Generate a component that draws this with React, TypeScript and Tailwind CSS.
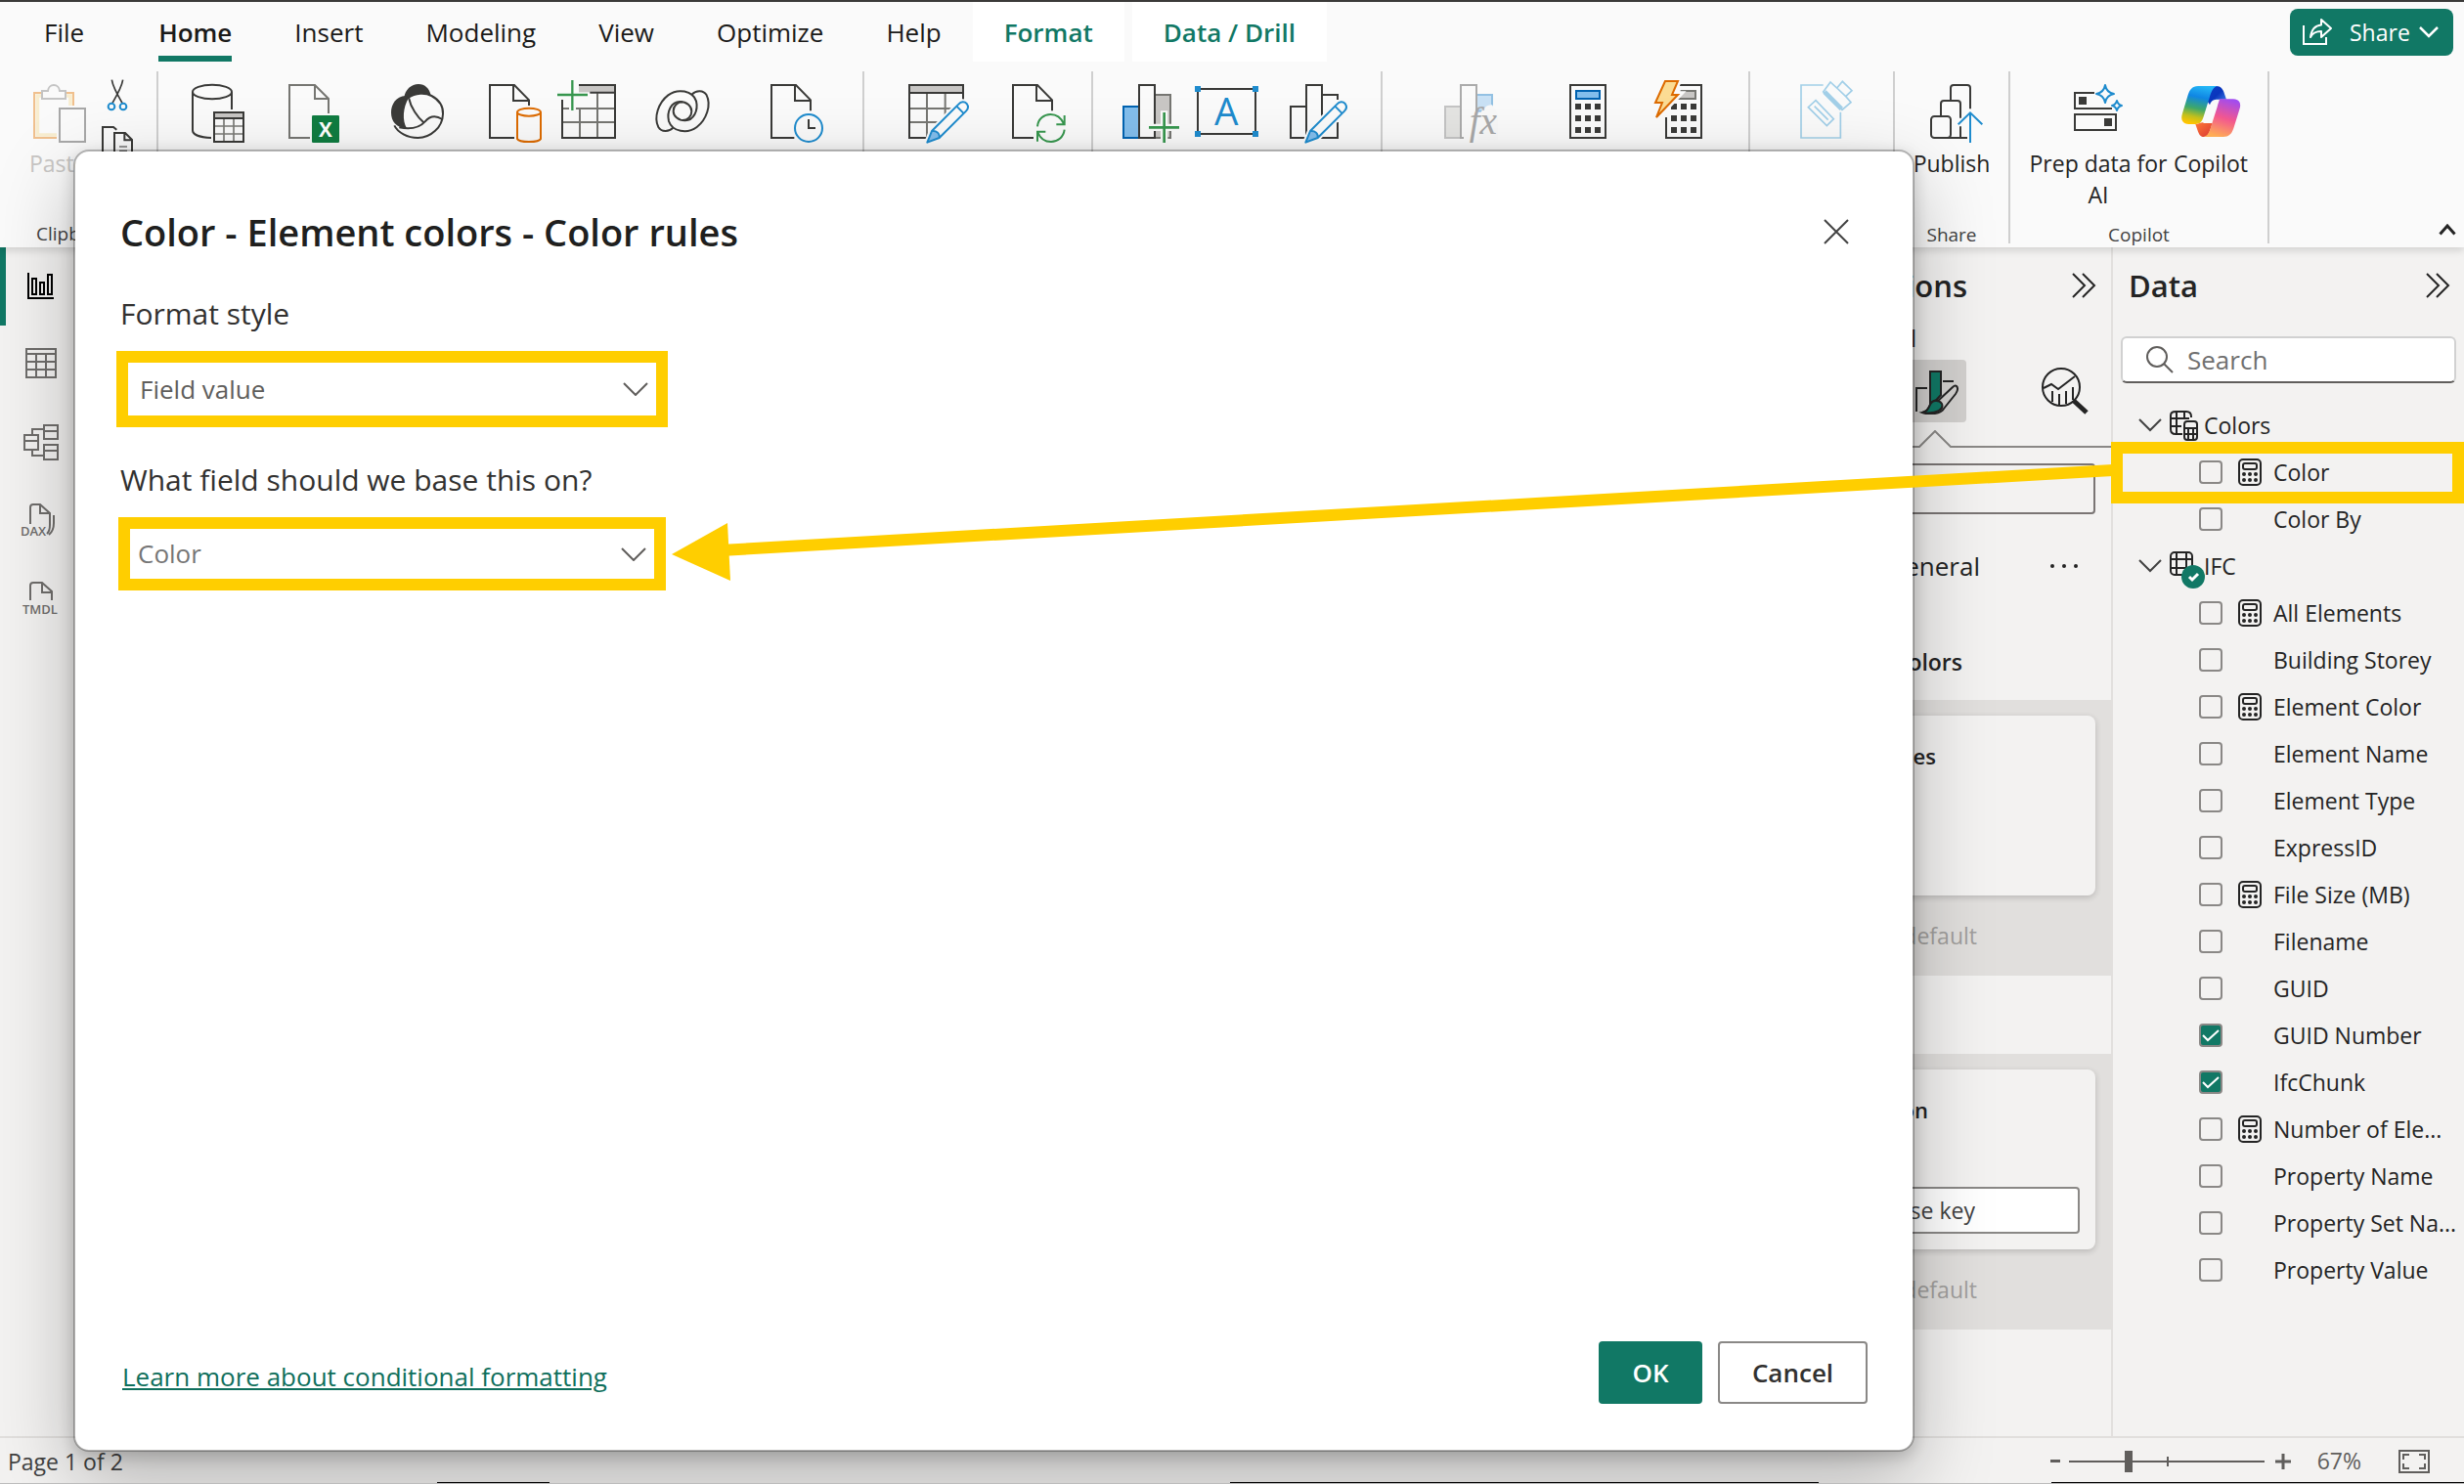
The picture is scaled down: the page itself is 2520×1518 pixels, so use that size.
import type { ReactNode } from "react";

const INK = "#3a3a38";
const BLUE = "#1e8bcd";
const GREEN = "#37964e";
const TEAL = "#117865";

type ArtProps = { vb: string; className: string; children: ReactNode };

/* Ribbon drawings use three drawing units per pixel, so a stroke of 6 is 2px. */
function Art({ vb, className, children }: ArtProps) {
  return (
    <svg viewBox={vb} className={"shrink-0 " + className} fill="none" stroke={INK} strokeWidth={6} aria-hidden="true">
      {children}
    </svg>
  );
}

function RibbonButton({ label, className, children }: { label: string; className: string; children: ReactNode }) {
  return (
    <button type="button" aria-label={label} className={"h-[68px] " + className}>
      {children}
    </button>
  );
}

function Group({ label, className, children }: { label?: string; className?: string; children: ReactNode }) {
  return (
    <section className={"flex h-44 flex-col justify-between border-r-2 border-[#cfcfcf] pt-[7px] " + (className ?? "")}>
      <div className="flex items-start">{children}</div>
      {label && <div className="h-5 text-center text-[19px] leading-[23px] text-[#424242]">{label}</div>}
    </section>
  );
}

function Pencil({ x = 0 }: { x?: number }) {
  return (
    <g transform={`translate(${x} 0)`}>
      <path d="M630 192 L712 110 C720 101 730 101 737 108 C743 116 742 124 735 131 L653 213 L616 227Z" stroke="#fafafa" strokeWidth={18} fill="#fafafa" />
      <path d="M630 192 C645 190 655 200 653 213 L616 227Z" fill="#83beec" stroke="none" />
      <path d="M630 192 L712 110 C720 101 730 101 737 108 C743 116 742 124 735 131 L653 213 L616 227Z M706 116 L729 139 M630 192 C645 190 655 200 653 213" stroke={BLUE} strokeLinejoin="round" />
    </g>
  );
}

function Paste() {
  return (
    <Art vb="30 30 180 204" className="h-[68px] w-[60px]">
      <path d="M72 75 H45 V213 H114 M138 75 H165 V114" stroke="#f0c08e" />
      <path d="M68 84 H55 V204 H114 M144 84 H156 V114" stroke="#f8edcf" strokeWidth={11} />
      <path d="M69 69 H87 C88 58 96 51 105 51 C114 51 122 58 123 69 H141 V93 H69Z" stroke="#c4c4c4" fill="#fafafa" />
      <rect x="123" y="123" width="78" height="102" stroke="#a8a8a8" fill="#fafafa" />
    </Art>
  );
}

function Cut() {
  return (
    <Art vb="240 30 120 108" className="h-9 w-10">
      <path d="M283 35 C286 55 295 72 315 106 M317 35 C314 55 305 72 285 106" strokeWidth={5} />
      <circle cx="282" cy="117" r="10" stroke={BLUE} />
      <circle cx="318" cy="117" r="10" stroke={BLUE} />
    </Art>
  );
}

function Copy() {
  return (
    <Art vb="240 168 120 120" className="h-10 w-10">
      <path d="M255 270 V180 H288 L298 188" />
      <path d="M291 290 V198 H324 L345 219 V290 M322 198 V220 H345" />
      <path d="M306 240 H330 M306 253 H330" stroke="#777" strokeWidth={5} />
    </Art>
  );
}

function GetData() {
  return (
    <Art vb="519 30 180 204" className="h-[68px] w-[60px]">
      <ellipse cx="591" cy="72" rx="60" ry="22" />
      <path d="M531 72 V190 C531 204 555 212 588 213 M651 72 V126" />
      <rect x="597" y="135" width="90" height="18" fill="#c8c6c4" stroke="none" />
      <path d="M597 177 H687 M597 201 H687 M627 153 V225 M657 153 V225" stroke="#7a7a76" strokeWidth={5} />
      <path d="M597 135 H687 V225 H597Z M597 153 H687" />
    </Art>
  );
}

function Excel() {
  return (
    <Art vb="813 30 180 204" className="h-[68px] w-[60px]">
      <path d="M891 213 H828 V51 H906 L948 93 V138 M906 51 V93 H948" stroke="#767672" />
      <rect x="897" y="144" width="84" height="84" rx="4" fill="#107c41" stroke="none" />
      <text x="939" y="209" fontSize="62" fontWeight="700" textAnchor="middle" fill="#fff" stroke="none">X</text>
    </Art>
  );
}

function OneLake() {
  return (
    <Art vb="1131 30 180 204" className="h-[68px] w-[60px]">
      <path d="M1192 90 C1215 74 1245 74 1264 84 C1290 98 1300 120 1299 140 C1298 180 1262 213 1222 213 C1190 213 1160 196 1150 175" />
      <path d="M1180 90 C1182 65 1203 48 1224 48 C1244 48 1258 62 1262 82 C1240 74 1212 76 1192 90Z" fill={INK} stroke="none" />
      <path d="M1184 84 C1155 86 1140 110 1140 135 C1140 162 1155 182 1188 184 C1174 160 1176 120 1194 90Z" fill={INK} stroke="none" />
      <path d="M1194 90 C1200 120 1222 150 1240 166 M1165 181 C1200 188 1225 184 1244 163 C1262 142 1280 145 1297 156" />
    </Art>
  );
}

function Doc() {
  return <path d="M198 213 H123 V51 H198 L243 97 V114 M195 51 V99 H243" />;
}

function SqlServer() {
  return (
    <Art vb="111 30 180 204" className="h-[68px] w-[60px]">
      <Doc />
      <ellipse cx="243" cy="134" rx="36" ry="12" stroke="#dd6b00" />
      <path d="M207 134 V216 C212 228 274 228 279 216 V134" stroke="#dd6b00" />
    </Art>
  );
}

function EnterData() {
  return (
    <Art vb="330 30 180 204" className="h-[68px] w-[60px]">
      <rect x="396" y="51" width="111" height="22" fill="#c8c6c4" stroke="none" />
      <path d="M345 123 H366 M387 123 H507 M345 165 H507 M399 123 V213 M453 76 V213" stroke="#767672" />
      <path d="M396 51 H507 V213 H345 V96 M430 74 H507" />
      <path d="M330 81 H423 M376 36 V129" stroke={GREEN} strokeWidth={7} />
    </Art>
  );
}

function Dataverse() {
  return (
    <Art vb="624 30 180 204" className="h-[68px] w-[60px]">
      <path d="M685 182 C672 196 650 196 640 180 C625 150 640 105 670 82 C700 60 745 68 756 100 C763 130 748 160 722 160 C700 160 686 145 686 131 C686 115 698 103 714 103" />
      <path d="M743 80 C756 66 778 66 788 82 C803 112 788 157 758 180 C728 202 683 194 672 162 C665 132 680 102 706 102 C728 102 742 117 742 131 C742 147 730 159 714 159" />
    </Art>
  );
}

function Recent() {
  return (
    <Art vb="975 30 180 204" className="h-[68px] w-[60px]">
      <path d="M1057 213 H987 V51 H1062 L1107 97 V130 M1059 51 V99 H1107" />
      <circle cx="1101" cy="183" r="42" stroke={BLUE} />
      <path d="M1101 156 V183 H1122" />
    </Art>
  );
}

function TransformData() {
  return (
    <Art vb="1398 30 198 204" className="h-[68px] w-[66px]">
      <rect x="1410" y="51" width="165" height="24" fill="#c8c6c4" stroke="none" />
      <path d="M1410 123 H1575 M1410 165 H1530 M1464 75 V213 M1520 75 V150" stroke="#767672" />
      <path d="M1575 96 V51 H1410 V213 H1470 M1410 75 H1575" />
      <Pencil x={849} />
    </Art>
  );
}

function Refresh() {
  return (
    <Art vb="111 30 180 204" className="h-[68px] w-[60px]">
      <path d="M186 213 H123 V51 H198 L243 97 V130 M195 51 V99 H243" />
      <path d="M198 178 C200 155 218 141 238 141 C256 141 270 150 279 170 M281 144 V172 H256 M281 188 C278 212 260 225 240 225 C222 225 207 216 199 196 M198 224 V194 H223" stroke={GREEN} />
    </Art>
  );
}

function NewVisual() {
  return (
    <Art vb="45 30 192 204" className="h-[68px] w-16">
      <rect x="153" y="81" width="48" height="132" fill="#c8c6c4" stroke="#767672" />
      <rect x="57" y="117" width="48" height="96" fill="#83beec" stroke="#0063b1" />
      <rect x="105" y="51" width="48" height="162" fill="#fafafa" />
      <path d="M135 181 H228 M182 130 V228" stroke="#fafafa" strokeWidth={22} />
      <path d="M135 181 H228 M182 135 V228" stroke={GREEN} strokeWidth={8} />
    </Art>
  );
}

function TextBox() {
  return (
    <Art vb="270 30 210 204" className="h-[68px] w-[70px]">
      <rect x="285" y="63" width="177" height="138" />
      <path d="M276 54 h18 v18 h-18Z M453 54 h18 v18 h-18Z M276 192 h18 v18 h-18Z M453 192 h18 v18 h-18Z" fill={BLUE} stroke="none" />
      <text x="373" y="174" fontSize="116" fontWeight="400" textAnchor="middle" fill={BLUE} stroke="none">A</text>
    </Art>
  );
}

function MoreVisuals() {
  return (
    <Art vb="558 30 192 204" className="h-[68px] w-16">
      <path d="M618 117 H570 V213 H714 V165 M618 213 V51 H666 V150 M666 81 H714 V96" />
      <Pencil />
    </Art>
  );
}

function NewMeasure() {
  return (
    <Art vb="1032 30 180 204" className="h-[68px] w-[60px]">
      <rect x="1044" y="117" width="48" height="96" fill="#e4e4e2" stroke="#c4c4c4" />
      <rect x="1140" y="81" width="48" height="50" fill="#c9e1f5" stroke="#93c1e3" />
      <path d="M1101 213 H1092 V51 H1140 V132" fill="#fafafa" stroke="#ababab" />
      <path d="M1146 218 C1130 180 1150 110 1188 112 L1206 140 V220Z" fill="#f8f8f8" stroke="none" />
      <text x="1118" y="202" fontSize="118" fontStyle="italic" fontFamily="Liberation Serif, serif" fill="#a8a8a8" stroke="none">fx</text>
    </Art>
  );
}

function Keys({ x }: { x: number }) {
  return (
    <g fill={INK} stroke="none">
      {[108, 144, 180].map((y) =>
        [0, 30, 60].map((dx) => <rect key={`${y}-${dx}`} x={x + dx} y={y} width="18" height="18" />),
      )}
    </g>
  );
}

function QuickMeasure() {
  return (
    <Art vb="1416 30 135 204" className="h-[68px] w-[45px]">
      <rect x="1428" y="51" width="108" height="162" />
      <rect x="1446" y="69" width="72" height="24" fill="#83beec" stroke="#0063b1" />
      <Keys x={1443} />
    </Art>
  );
}

function FlashMeasure() {
  return (
    <Art vb="0 30 168 204" className="h-[68px] w-14">
      <path d="M80 51 H156 V213 H48 V150" />
      <path d="M92 69 H138 V93 H80" fill="#c8c6c4" stroke="#767672" />
      <Keys x={63} />
      <path d="M45 39 H84 L66 81 H84 L18 150 L36 105 H15Z" fill="#fafafa" stroke="#fafafa" strokeWidth={22} />
      <path d="M45 39 H84 L66 81 H84 L18 150 L36 105 H15Z" fill="#fbdc94" stroke="#dd6b00" />
    </Art>
  );
}

function Sensitivity() {
  return (
    <Art vb="54 30 180 204" className="h-[68px] w-[60px]">
      <g stroke="#a2cfe8" strokeWidth={5}>
        <path d="M134 51 H66 V213 H187 V134" />
        <path d="M111 98 L166 155 L145 176 L88 119Z M107 116 L149 158" />
        <path d="M134 72 L156 42 L176 60 L193 40 L222 68 L203 86 L219 104 L192 127Z M176 60 L203 86" />
        <path d="M138 72 L190 124" strokeWidth={14} />
      </g>
    </Art>
  );
}

function PublishIcon() {
  return (
    <Art vb="438 30 180 204" className="h-[68px] w-[60px] overflow-visible">
      <rect x="465" y="147" width="60" height="66" rx="10" />
      <path d="M495 147 V108 Q495 99 504 99 H546 Q555 99 555 108 V152 M555 178 V213 M525 99 V60 Q525 51 534 51 H576 Q585 51 585 60 V124 M510 213 H576" />
      <path d="M585 228 V138 M548 172 L585 136 L622 172" stroke={BLUE} />
    </Art>
  );
}

function PrepIcon() {
  return (
    <Art vb="894 30 180 204" className="h-[68px] w-[60px]">
      <path d="M972 75 H912 V123 H1026" />
      <rect x="912" y="141" width="126" height="48" />
      <path d="M924 87 h24 v24 h-24Z M1002 153 h24 v24 h-24Z" fill={INK} stroke="none" />
      <path d="M1005 51 Q1009 74 1032 78 Q1009 82 1005 105 Q1001 82 978 78 Q1001 74 1005 51Z M1041 99 Q1044 111 1056 114 Q1044 117 1041 129 Q1038 117 1026 114 Q1038 111 1041 99Z" stroke={BLUE} strokeLinejoin="round" />
    </Art>
  );
}

function CopilotIcon() {
  return (
    <Art vb="1227 30 192 204" className="h-[68px] w-16">
      <defs>
        <linearGradient id="cpA" x1="0.6" y1="0" x2="0.4" y2="1">
          <stop offset="0" stopColor="#24b6f6" />
          <stop offset="0.3" stopColor="#0f86e3" />
          <stop offset="0.6" stopColor="#3fa869" />
          <stop offset="0.82" stopColor="#c2c01c" />
          <stop offset="1" stopColor="#ffc400" />
        </linearGradient>
        <linearGradient id="cpB" x1="0" y1="0" x2="1" y2="1">
          <stop offset="0" stopColor="#0b3fc4" />
          <stop offset="0.5" stopColor="#0a36bd" />
          <stop offset="1" stopColor="#4c8df0" />
        </linearGradient>
        <linearGradient id="cpC" x1="0.7" y1="0" x2="0.4" y2="1">
          <stop offset="0" stopColor="#a14cf0" />
          <stop offset="0.5" stopColor="#f2578f" />
          <stop offset="1" stopColor="#ffad55" />
        </linearGradient>
        <linearGradient id="cpD" x1="0" y1="0" x2="1" y2="1">
          <stop offset="0" stopColor="#ff7a35" />
          <stop offset="1" stopColor="#d93636" />
        </linearGradient>
      </defs>
      <g stroke="none">
        <path d="M1340 54 C1354 54 1361 64 1365 78 L1371 95 H1345 C1332 95 1325 98 1320 112 L1310 97 C1318 80 1327 54 1340 54Z" fill="url(#cpB)" />
        <path d="M1342 54 H1284 C1266 54 1258 66 1253 82 L1236 138 C1229 158 1238 171 1256 171 H1276 C1290 171 1296 164 1301 148 L1319 90 C1324 74 1329 58 1342 54Z" fill="url(#cpA)" />
        <path d="M1276 171 C1290 171 1297 162 1302 168 H1328 L1322 186 C1318 200 1312 210 1302 210 C1290 210 1286 200 1282 188Z" fill="url(#cpD)" />
        <path d="M1350 94 H1392 C1410 94 1418 106 1411 126 L1393 184 C1387 202 1378 210 1362 210 H1302 C1316 206 1320 192 1324 178 L1343 118 C1346 106 1349 100 1350 94Z" fill="url(#cpC)" />
      </g>
    </Art>
  );
}

const plainTabs = ["File", "Home", "Insert", "Modeling", "View", "Optimize", "Help"];

function Header() {
  return (
    <header className="relative z-10 border-t-2 border-[#3b3a39] bg-[#fafafa] shadow-[0_3px_8px_rgba(0,0,0,0.14)]">
      <div className="flex items-start">
        <nav className="flex pl-[13px] text-[26px] text-[#1b1a19]">
          {plainTabs.map((t) => (
            <button key={t} type="button" className={"px-8 pt-[7px] " + (t === "File" ? "mr-3" : "")}>
              <span className={"block h-12 leading-[48px] " + (t === "Home" ? "font-semibold" : "")}>{t}</span>
              <span className={"block h-1.5 " + (t === "Home" ? "bg-[#117865]" : "")} />
            </button>
          ))}
          <button type="button" className="mr-2 bg-white px-8 pt-[7px] font-semibold text-[#117865]">
            <span className="block h-[54px] leading-[48px]">Format</span>
          </button>
          <button type="button" className="bg-white px-8 pt-[7px] font-semibold text-[#117865]">
            <span className="block h-[54px] leading-[48px]">Data / Drill</span>
          </button>
        </nav>
        <button type="button" className="mt-[7px] mr-[11px] ml-auto flex h-12 w-[167px] items-center rounded-lg bg-[#117865] pl-3 text-[23px] text-white">
          <svg viewBox="0 0 32 30" className="mr-[17px] h-[30px] w-8" fill="none" stroke="#fff" strokeWidth={2} aria-hidden="true">
            <path d="M2 8 V27 H25 V20" />
            <path d="M9 20 C10 12 14 8 20 7.5 V2 L30 11 L20 20 V14 C15 14 11 16 9 20Z" strokeLinejoin="round" />
          </svg>
          Share
          <svg viewBox="0 0 22 12" className="ml-2 h-3 w-[22px]" fill="none" stroke="#fff" strokeWidth={2.5} aria-hidden="true">
            <path d="M2 1 L11 10 L20 1" />
          </svg>
        </button>
      </div>

      <div className="flex pt-[10px] pb-1">
        <Group className="w-[162px] pl-[30px]">
          <button type="button" className="flex w-[70px] flex-col items-start text-[23px] leading-8 text-[#c8c6c4]">
            <Paste />
            <span className="mt-[3px]">Paste</span>
            <span className="mt-[46px] ml-[7px] text-[19px] leading-5 text-[#424242]">Clipboard</span>
          </button>
          <div className="flex w-10 flex-col gap-[10px]">
            <button type="button" aria-label="Cut"><Cut /></button>
            <button type="button" aria-label="Copy"><Copy /></button>
          </div>
        </Group>
        <Group className="pr-[37px]">
          <RibbonButton label="Get data" className="ml-[31px]"><GetData /></RibbonButton>
          <RibbonButton label="Excel workbook" className="ml-[38px]"><Excel /></RibbonButton>
          <RibbonButton label="OneLake catalog" className="ml-[46px]"><OneLake /></RibbonButton>
          <RibbonButton label="SQL Server" className="ml-10"><SqlServer /></RibbonButton>
          <RibbonButton label="Enter data" className="ml-[13px]"><EnterData /></RibbonButton>
          <RibbonButton label="Dataverse" className="ml-[38px]"><Dataverse /></RibbonButton>
          <RibbonButton label="Recent sources" className="ml-[57px]"><Recent /></RibbonButton>
        </Group>
        <Group className="pr-6">
          <RibbonButton label="Transform data" className="ml-[42px]"><TransformData /></RibbonButton>
          <RibbonButton label="Refresh" className="ml-10"><Refresh /></RibbonButton>
        </Group>
        <Group className="pr-8">
          <RibbonButton label="New visual" className="ml-[27px]"><NewVisual /></RibbonButton>
          <RibbonButton label="Text box" className="ml-[11px]"><TextBox /></RibbonButton>
          <RibbonButton label="More visuals" className="ml-[26px]"><MoreVisuals /></RibbonButton>
        </Group>
        <Group className="pr-11">
          <RibbonButton label="New visual calculation" className="ml-[60px]"><NewMeasure /></RibbonButton>
          <RibbonButton label="New measure" className="ml-[68px]"><QuickMeasure /></RibbonButton>
          <RibbonButton label="Quick measure" className="ml-[41px]"><FlashMeasure /></RibbonButton>
        </Group>
        <Group className="pr-[38px]">
          <RibbonButton label="Sensitivity" className="ml-12"><Sensitivity /></RibbonButton>
        </Group>
        <Group label="Share" className="w-[118px]">
          <button type="button" className="flex flex-1 flex-col items-center text-[23px] leading-8 text-[#242424]">
            <PublishIcon />
            <span className="mt-[3px]">Publish</span>
          </button>
        </Group>
        <Group label="Copilot" className="w-[265px] px-4">
          <button type="button" className="flex w-[148px] flex-col items-center text-[23px] leading-8 text-[#242424]">
            <PrepIcon />
            <span className="mt-[3px] whitespace-nowrap">Prep data for</span>
            <span>AI</span>
          </button>
          <button type="button" className="flex w-[82px] flex-col items-center text-[23px] leading-8 text-[#242424]">
            <CopilotIcon />
            <span className="mt-[3px]">Copilot</span>
          </button>
        </Group>
        <button type="button" aria-label="Collapse ribbon" className="mr-2 mb-2 ml-auto self-end">
          <svg viewBox="0 0 18 12" className="h-3 w-[18px]" fill="none" stroke="#242424" strokeWidth={3} aria-hidden="true">
            <path d="M1.5 10.5 L9 2 L16.5 10.5" />
          </svg>
        </button>
      </div>
    </header>
  );
}

function RailIcon({ name, children }: { name: string; children: ReactNode }) {
  const active = name === "Report view";
  return (
    <button
      type="button"
      aria-label={name}
      className={"flex h-20 w-full items-center border-l-[6px] pl-[15px] " + (active ? "border-[#117865]" : "border-transparent")}
    >
      <svg viewBox="0 0 42 40" className="h-10 w-[42px]" fill="none" stroke={active ? "#000" : "#6f6d6b"} strokeWidth={2} aria-hidden="true">
        {children}
      </svg>
    </button>
  );
}

function Rail() {
  return (
    <nav className="w-[83px] shrink-0">
      <RailIcon name="Report view">
        <path d="M8 6 V32 H34" />
        <path d="M12 12 h4 v16 h-4Z M20 16 h4 v12 h-4Z M28 8 h4 v20 h-4Z" />
      </RailIcon>
      <RailIcon name="Table view">
        <path d="M6 4 H36 V33 H6Z M6 9 H36 M6 17 H36 M6 25 H36 M16 9 V33 M26 9 V33" />
      </RailIcon>
      <RailIcon name="Model view">
        <path d="M4 12 H18 V27 H4Z M4 18 H18 M24 2 H38 V16 H24Z M24 8 H38 M24 22 H38 V37 H24Z M24 28 H38 M12 12 V6 H24 M12 27 V33 H24" />
      </RailIcon>
      <RailIcon name="DAX query view">
        <path d="M10 23 V6 Q10 3 13 3 H20 L30 12 V24 Q30 30 27 33 M20 3 V12 H30 M34 14 V22 Q34 30 29 34" />
        <text x="0" y="35" fontSize="13" fontWeight="600" fill="#6f6d6b" stroke="none">DAX</text>
      </RailIcon>
      <RailIcon name="TMDL view">
        <path d="M10 21 V6 Q10 3 13 3 H22 L32 12 V21 M22 3 V13 H32" />
        <text x="2" y="35" fontSize="13" fontWeight="600" fill="#6f6d6b" stroke="none">TMDL</text>
      </RailIcon>
    </nav>
  );
}

function DoubleChevron() {
  return (
    <svg viewBox="0 0 26 26" className="h-[26px] w-[26px]" fill="none" stroke="#242424" strokeWidth={2} aria-hidden="true">
      <path d="M2 1 L14 13 L2 25 M12 1 L24 13 L12 25" />
    </svg>
  );
}

function VisualizationsPane() {
  return (
    <aside className="flex w-[460px] shrink-0 flex-col border-r-2 border-[#e1dfdd] text-[#242424]">
      <div className="flex items-center justify-end pt-[19px] pr-[15px]">
        <h2 className="mr-[106px] text-[31px] leading-10 font-semibold">Visualizations</h2>
        <button type="button" aria-label="Collapse visualizations"><DoubleChevron /></button>
      </div>
      <div className="mt-[18px] pr-[199px] text-right text-[23px] leading-8">Format visual</div>
      <div className="mt-1.5 flex h-16 items-center justify-end pr-[22px]">
        <button type="button" aria-label="Format visual" className="mr-[76px] flex h-16 w-16 items-center justify-end rounded bg-[#d2d0ce] pr-1.5">
          <svg viewBox="0 0 48 48" className="h-12 w-12" fill="none" stroke="#242424" strokeWidth={2} aria-hidden="true">
            <path d="M3 45 V21 H14" />
            <path d="M17 4 H28 V28 L17 40Z" fill={TEAL} />
            <path d="M30 14 H41" />
            <path d="M44 19 C46 21 45 24 43 27 L31 42 C28 47 17 49 9 46 C14 45 15 42 17 38 C18 34 22 33 25 34 L40 20 C42 18 43 18 44 19Z" fill="#d2d0ce" />
            <path d="M9 46 C14 45 15 42 17 38 C19 33 26 33 29 37 C31 42 25 48 9 46Z" fill={TEAL} />
          </svg>
        </button>
        <button type="button" aria-label="Analytics">
          <svg viewBox="0 0 50 50" className="h-[50px] w-[50px]" fill="none" stroke="#242424" strokeWidth={2} aria-hidden="true">
            <circle cx="21" cy="21" r="19" />
            <path d="M3 22 L11 18 L18 23 L35 10 M12 25 V36 M19 28 V39 M26 25 V38 M33 21 V34" />
            <path d="M34 35 L47 47" strokeWidth={5} />
          </svg>
        </button>
      </div>
      <div className="mt-2 flex justify-end">
        <svg viewBox="0 0 220 18" className="h-[18px] w-[220px]" fill="none" stroke="#8a8886" strokeWidth={2} aria-hidden="true">
          <path d="M0 17 H24 L40 1 L56 17 H220" />
        </svg>
      </div>
      <input aria-label="Search settings" className="mt-4 mr-4 ml-4 h-[52px] rounded border-2 border-[#7a7574]" />
      <div className="mt-[33px] flex h-10 items-center justify-end pr-[33px] text-[26px]">
        <span>General</span>
        <button type="button" aria-label="More options" className="ml-[71px]">
          <svg viewBox="0 0 30 6" className="h-1.5 w-[30px]" fill="#242424" aria-hidden="true">
            <circle cx="3" cy="3" r="2" />
            <circle cx="15" cy="3" r="2" />
            <circle cx="27" cy="3" r="2" />
          </svg>
        </button>
      </div>
      <h3 className="mt-[58px] pr-[152px] text-right text-[23px] leading-10 font-semibold">Element colors</h3>
      <div className="mt-[19px] h-[282px] shrink-0 bg-[#e1dfdd] pt-4">
        <div className="mr-4 ml-4 h-[184px] rounded-lg bg-[#f3f2f1] pt-[25px] pr-[163px] text-right text-[22px] leading-8 font-semibold shadow-[0_2px_6px_rgba(0,0,0,0.18)]">
          Color rules
        </div>
        <div className="mt-[17px] pr-[137px] text-right text-[23px] leading-[48px] text-[#a19f9d]">Reset to default</div>
      </div>
      <div className="mt-20 h-[282px] shrink-0 bg-[#e1dfdd] pt-4">
        <div className="mr-4 ml-4 h-[184px] rounded-lg bg-[#f3f2f1] pt-[25px] shadow-[0_2px_6px_rgba(0,0,0,0.18)]">
          <div className="pr-[171px] text-right text-[22px] leading-8 font-semibold">Activation</div>
          <div className="mt-[63px] flex px-4">
            <input
              aria-label="License key"
              defaultValue="Enter license key"
              className="h-12 min-w-0 flex-1 rounded-sm border-2 border-[#8a8886] bg-white pr-[105px] text-right text-[23px] text-[#424242]"
            />
          </div>
        </div>
        <div className="mt-[17px] pr-[137px] text-right text-[23px] leading-[48px] text-[#a19f9d]">Reset to default</div>
      </div>
    </aside>
  );
}

type Field = { name: string; measure?: boolean; checked?: boolean; marked?: boolean };

const colorFields: Field[] = [{ name: "Color", measure: true, marked: true }, { name: "Color By" }];

const ifcFields: Field[] = [
  { name: "All Elements", measure: true },
  { name: "Building Storey" },
  { name: "Element Color", measure: true },
  { name: "Element Name" },
  { name: "Element Type" },
  { name: "ExpressID" },
  { name: "File Size (MB)", measure: true },
  { name: "Filename" },
  { name: "GUID" },
  { name: "GUID Number", checked: true },
  { name: "IfcChunk", checked: true },
  { name: "Number of Ele...", measure: true },
  { name: "Property Name" },
  { name: "Property Set Na..." },
  { name: "Property Value" },
];

function CalculatorIcon() {
  return (
    <svg viewBox="0 0 24 28" className="h-7 w-6" fill="none" stroke="#242424" strokeWidth={2} aria-hidden="true">
      <rect x="1" y="1" width="22" height="26" rx="4" />
      <rect x="5" y="5" width="14" height="6" rx="2" />
      <g fill="#242424" stroke="none">
        {[16, 22].map((y) => [6, 12, 18].map((x) => <circle key={`${x}-${y}`} cx={x} cy={y} r="2" />))}
      </g>
    </svg>
  );
}

function FieldRow({ field }: { field: Field }) {
  return (
    <li className="relative h-12">
      <label className="flex h-12 items-center pl-[88px] text-[23px]">
        <span className="relative mr-4 h-6 w-6 shrink-0">
          <input
            type="checkbox"
            defaultChecked={field.checked}
            className="peer block h-6 w-6 appearance-none rounded-sm border-2 border-[#8a8886] checked:bg-[#117865]"
          />
          <svg viewBox="0 0 24 24" className="pointer-events-none absolute inset-0 hidden h-6 w-6 peer-checked:block" fill="none" stroke="#fff" strokeWidth={2} aria-hidden="true">
            <path d="M4 12 L9 17 L20 7" />
          </svg>
        </span>
        <span className="mr-3 w-6 shrink-0">{field.measure && <CalculatorIcon />}</span>
        <span className="whitespace-nowrap">{field.name}</span>
      </label>
      {field.marked && <div className="pointer-events-none absolute -top-[7px] right-0 -bottom-2 -left-0.5 border-[12px] border-[#ffce00]" />}
    </li>
  );
}

function TableRow({ name, children }: { name: string; children: ReactNode }) {
  return (
    <button type="button" className="flex h-12 w-full items-center pl-[25px] text-[23px]">
      <svg viewBox="0 0 26 14" className="mr-[5px] h-3.5 w-[26px]" fill="none" stroke="#424242" strokeWidth={2} aria-hidden="true">
        <path d="M2 1 L13 12 L24 1" />
      </svg>
      <svg viewBox="0 0 36 36" className="mr-px h-9 w-9 overflow-visible" fill="none" stroke="#242424" strokeWidth={2} aria-hidden="true">
        {children}
      </svg>
      <span className="whitespace-nowrap">{name}</span>
    </button>
  );
}

function DataPane() {
  return (
    <aside className="w-[359px] shrink-0 text-[#242424]">
      <div className="flex items-center justify-between pt-[19px] pr-[14px] pl-4">
        <h2 className="text-[31px] leading-10 font-semibold">Data</h2>
        <button type="button" aria-label="Collapse data"><DoubleChevron /></button>
      </div>
      <div className="mt-8 mr-2 ml-2 flex h-12 items-center rounded-md border-2 border-[#d1d1d1] border-b-[#605e5c] bg-white pl-6">
        <svg viewBox="0 0 28 28" className="mr-[14px] h-7 w-7 shrink-0" fill="none" stroke="#605e5c" strokeWidth={2} aria-hidden="true">
          <circle cx="11" cy="11" r="10" />
          <path d="M18 18 L27 27" />
        </svg>
        <input type="search" aria-label="Search" placeholder="Search" className="w-full min-w-0 bg-transparent text-[26px] placeholder:text-[#707070]" />
      </div>
      <div className="mt-[19px]">
        <TableRow name="Colors">
          <path d="M15 27 H8 Q3 27 3 22 V8 Q3 4 8 4 H19 Q24 4 24 9 V10 M3 11 H22 M3 19 H14 M9 4 V27 M17 4 V12" />
          <rect x="17" y="14" width="13" height="19" rx="3" fill="#f3f2f1" />
          <path d="M17 21 H30 M17 27 H30 M21 21 V33 M26 21 V33" />
        </TableRow>
        <ul>{colorFields.map((f) => <FieldRow key={f.name} field={f} />)}</ul>
        <TableRow name="IFC">
          <rect x="3" y="4" width="22" height="23" rx="4" />
          <path d="M3 11 H25 M3 20 H25 M9 4 V27 M19 4 V27" />
          <circle cx="26" cy="29" r="12" fill={TEAL} stroke="none" />
          <path d="M22 29 L25 32 L31 26" stroke="#fff" strokeWidth={3} />
        </TableRow>
        <ul>{ifcFields.map((f) => <FieldRow key={f.name} field={f} />)}</ul>
      </div>
    </aside>
  );
}

function StatusBar() {
  return (
    <footer className="flex h-[49px] shrink-0 items-center border-t-2 border-[#e1dfdd] text-[23px] text-[#605e5c]">
      <span className="pt-0.5 pl-2 text-[#424242]">Page 1 of 2</span>
      <button type="button" aria-label="Zoom out" className="ml-auto flex h-8 w-[10px] items-center">
        <span className="h-[3px] w-full bg-[#605e5c]" />
      </button>
      <div className="relative ml-[9px] flex h-6 w-[200px] items-center">
        <div className="h-0.5 w-full bg-[#605e5c]" />
        <div className="absolute left-1/2 h-[10px] w-0.5 bg-[#605e5c]" />
        <input
          type="range"
          aria-label="Zoom"
          defaultValue={30}
          className="absolute inset-0 w-full appearance-none bg-transparent [&::-webkit-slider-thumb]:h-[22px] [&::-webkit-slider-thumb]:w-2 [&::-webkit-slider-thumb]:appearance-none [&::-webkit-slider-thumb]:bg-[#605e5c]"
        />
      </div>
      <button type="button" aria-label="Zoom in" className="ml-[11px]">
        <svg viewBox="0 0 16 16" className="h-4 w-4" stroke="#605e5c" strokeWidth={3} aria-hidden="true">
          <path d="M0 8 H16 M8 0 V16" />
        </svg>
      </button>
      <span className="ml-[27px]">67%</span>
      <button type="button" aria-label="Fit to page" className="mr-[34px] ml-[37px]">
        <svg viewBox="0 0 34 26" className="h-[26px] w-[34px]" fill="none" stroke="#605e5c" strokeWidth={2} aria-hidden="true">
          <path d="M2 2 H32 V24 H2Z M6 11 V6 H12 M22 6 H28 V11 M28 15 V20 H22 M12 20 H6 V15" />
        </svg>
      </button>
    </footer>
  );
}

function SelectChevron() {
  return (
    <svg viewBox="0 0 26 14" className="pointer-events-none absolute top-1/2 right-2 h-3.5 w-[26px] -translate-y-1/2" fill="none" stroke="#605e5c" strokeWidth={2} aria-hidden="true">
      <path d="M1 1 L13 13 L25 1" />
    </svg>
  );
}

function RulesDialog() {
  return (
    <div
      role="dialog"
      aria-labelledby="dialog-title"
      className="absolute top-[153px] right-[562px] bottom-[33px] left-[75px] z-20 flex flex-col rounded-[16px] border-2 border-[#00000044] bg-white bg-clip-padding px-[46px] pt-[58px] pb-[47px] shadow-[0_30px_80px_rgba(0,0,0,0.26),0_5px_16px_rgba(0,0,0,0.18)]"
    >
      <div className="flex h-12 items-center justify-between">
        <h1 id="dialog-title" className="text-[38px] font-semibold text-[#201f1e]">Color - Element colors - Color rules</h1>
        <button type="button" aria-label="Close" className="flex h-16 w-16 items-center justify-center">
          <svg viewBox="0 0 26 26" className="h-[26px] w-[26px]" stroke="#424242" strokeWidth={2} aria-hidden="true">
            <path d="M1 1 L25 25 M25 1 L1 25" />
          </svg>
        </button>
      </div>

      <label htmlFor="format-style" className="mt-10 text-[30px] leading-10 text-[#323130]">Format style</label>
      <div className="relative mt-[18px] -ml-1 h-[78px] w-[564px] border-[12px] border-[#ffce00]">
        <select id="format-style" className="h-full w-full appearance-none bg-white pl-3 text-[26px] text-[#605e5c]">
          <option>Field value</option>
        </select>
        <SelectChevron />
      </div>

      <label htmlFor="base-field" className="mt-[34px] text-[30px] leading-10 text-[#323130]">What field should we base this on?</label>
      <div className="relative mt-[18px] -ml-0.5 h-[75px] w-[560px] border-[12px] border-[#ffce00]">
        <select id="base-field" className="h-full w-full appearance-none bg-white pl-2 text-[26px] text-[#767676]">
          <option>Color</option>
        </select>
        <SelectChevron />
      </div>

      <div className="mt-auto flex items-center">
        <a href="#" className="mt-2 mr-auto pl-0.5 text-[26px] text-[#0f6f5c] underline decoration-2 underline-offset-2">Learn more about conditional formatting</a>
        <button type="button" className="h-16 w-[106px] rounded-sm bg-[#117865] text-[26px] font-semibold text-white">OK</button>
        <button type="button" className="ml-4 h-16 w-[153px] rounded-sm border-2 border-[#8a8886] bg-white text-[26px] font-semibold text-[#323130]">Cancel</button>
      </div>
    </div>
  );
}

export default function App() {
  return (
    <div className="relative flex h-screen flex-col overflow-hidden bg-[#f3f2f1] font-['Open_Sans','Noto_Sans',sans-serif]">
      <Header />
      <main className="flex min-h-0 flex-1">
        <Rail />
        <div className="flex-1" />
        <VisualizationsPane />
        <DataPane />
      </main>
      <StatusBar />
      <RulesDialog />
      <svg viewBox="0 0 1474 130" className="pointer-events-none absolute top-[470px] right-[359px] z-30 h-[130px] w-[1474px]" aria-hidden="true">
        <path d="M50 93 L1474 11" stroke="#ffce00" strokeWidth={12} />
        <path d="M0 97 L57 65 L60 124Z" fill="#ffce00" />
      </svg>
      <div className="absolute inset-x-0 bottom-0 z-30 flex h-0.5 border-b border-[#bcbcbc]">
        <span className="ml-[447px] w-[115px] bg-black" />
        <span className="ml-[696px] w-[602px] bg-black" />
        <span className="ml-auto w-[422px] bg-black" />
      </div>
    </div>
  );
}
